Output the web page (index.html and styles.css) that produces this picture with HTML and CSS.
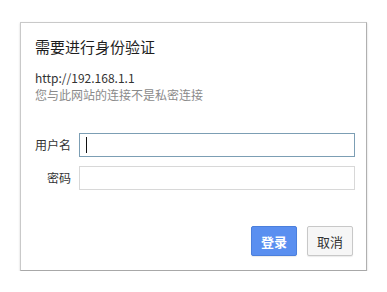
FILE: index.html
```html
<!DOCTYPE html>
<html lang="zh-CN">
<head>
<meta charset="utf-8">
<title>需要进行身份验证</title>
<link rel="stylesheet" href="styles.css">
</head>
<body>
<div class="dialog">
  <div class="title">需要进行身份验证</div>
  <div class="url">http://192.168.1.1</div>
  <div class="note">您与此网站的连接不是私密连接</div>
  <div class="form">
    <label class="label">用户名</label>
    <div class="field focused"><span class="caret"></span></div>
    <label class="label">密码</label>
    <div class="field"></div>
  </div>
  <div class="actions">
    <button class="btn primary">登录</button>
    <button class="btn">取消</button>
  </div>
</div>
</body>
</html>
```
FILE: styles.css
```css
html, body {
  margin: 0;
  padding: 0;
  background: #ffffff;
}
body {
  padding: 22px 0 0 20px;
  font-family: "Noto Sans CJK SC", "Liberation Sans", sans-serif;
  color: #222;
}
.dialog {
  width: 320px;
  box-sizing: content-box;
  padding: 14px 11px 14px 14px;
  border: 1px solid #c9c9c9;
  border-bottom-color: #a8a8a8;
  border-right-color: #b0b0b0;
  box-shadow: 0 1px 2px rgba(0,0,0,0.18);
  background: #fff;
}
.title {
  font-size: 15px;
  line-height: 20px;
  color: #1e1e1e;
}
.url {
  margin-top: 12px;
  font-family: "Noto Sans CJK SC", "Liberation Sans", sans-serif;
  font-size: 12px;
  line-height: 17px;
  color: #333;
}
.note {
  font-size: 12px;
  line-height: 17px;
  color: #8a8a8a;
}
.form {
  margin-top: 30px;
  display: grid;
  grid-template-columns: 36px 276px;
  column-gap: 8px;
  row-gap: 9px;
  align-items: center;
}
.label {
  font-size: 12px;
  line-height: 16px;
  text-align: right;
  color: #333;
  white-space: nowrap;
}
.field {
  height: 24px;
  box-sizing: border-box;
  border: 1px solid #d8d8d8;
  background: #fff;
  display: flex;
  align-items: center;
  padding-left: 6px;
}
.field.focused {
  border-color: #7c9eb4;
}
.caret {
  width: 1px;
  height: 16px;
  background: #111;
}
.actions {
  margin-top: 36px;
  display: flex;
  justify-content: flex-end;
  gap: 10px;
  padding-right: 2px;
}
.btn {
  width: 46px;
  height: 30px;
  box-sizing: border-box;
  border: 1px solid #c8c8c8;
  border-radius: 2px;
  background: #f6f6f6;
  color: #333;
  font-family: "Noto Sans CJK SC", sans-serif;
  font-size: 13px;
  padding: 0;
  box-shadow: 0 1px 1px rgba(0,0,0,0.08);
}
.btn.primary {
  background: #5a8ff0;
  border-color: #4b7fdc;
  color: #fff;
  font-weight: bold;
}
```
